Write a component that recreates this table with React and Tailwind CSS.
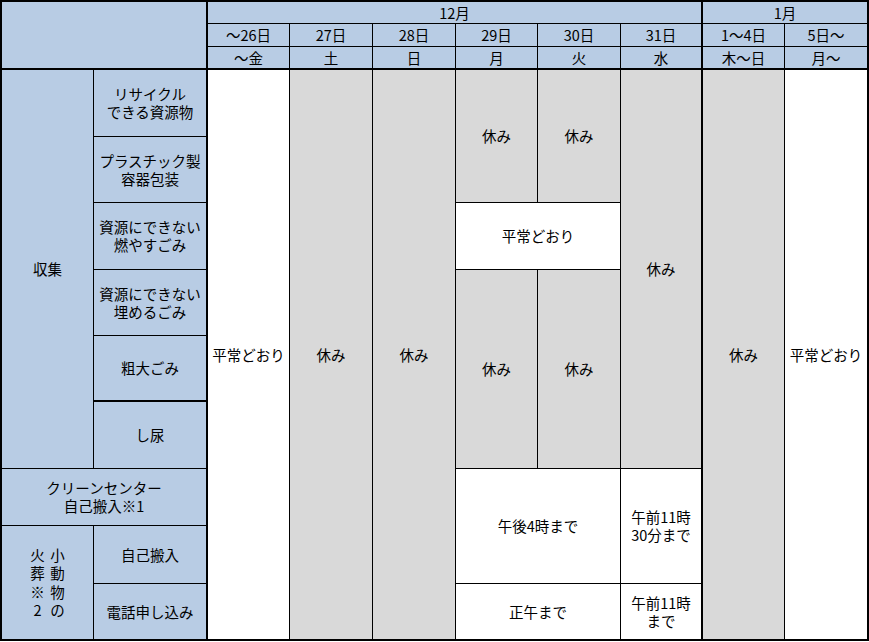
const BLUE = 'bg-[#b8cce4]';
const GRAY = 'bg-[#d9d9d9]';
const WHITE = 'bg-white';

// grid: 10 columns x 12 rows, each cell draws its own right/bottom border
const cells = [
  // header
  { pos: 'col-start-1 col-span-2 row-start-1 row-span-3', bg: BLUE, b: 'border-r-2 border-b-2' },
  { pos: 'col-start-3 col-span-6 row-start-1', bg: BLUE, b: 'border-r-2 border-b', text: '12月' },
  { pos: 'col-start-9 col-span-2 row-start-1', bg: BLUE, b: 'border-r-2 border-b', text: '1月' },

  { pos: 'col-start-3 row-start-2', bg: BLUE, b: 'border-r border-b', text: '～26日' },
  { pos: 'col-start-4 row-start-2', bg: BLUE, b: 'border-r border-b', text: '27日' },
  { pos: 'col-start-5 row-start-2', bg: BLUE, b: 'border-r border-b', text: '28日' },
  { pos: 'col-start-6 row-start-2', bg: BLUE, b: 'border-r border-b', text: '29日' },
  { pos: 'col-start-7 row-start-2', bg: BLUE, b: 'border-r border-b', text: '30日' },
  { pos: 'col-start-8 row-start-2', bg: BLUE, b: 'border-r-2 border-b', text: '31日' },
  { pos: 'col-start-9 row-start-2', bg: BLUE, b: 'border-r border-b', text: '1～4日' },
  { pos: 'col-start-10 row-start-2', bg: BLUE, b: 'border-r-2 border-b', text: '5日～' },

  { pos: 'col-start-3 row-start-3', bg: BLUE, b: 'border-r border-b-2', text: '～金' },
  { pos: 'col-start-4 row-start-3', bg: BLUE, b: 'border-r border-b-2', text: '土' },
  { pos: 'col-start-5 row-start-3', bg: BLUE, b: 'border-r border-b-2', text: '日' },
  { pos: 'col-start-6 row-start-3', bg: BLUE, b: 'border-r border-b-2', text: '月' },
  { pos: 'col-start-7 row-start-3', bg: BLUE, b: 'border-r border-b-2', text: '火' },
  { pos: 'col-start-8 row-start-3', bg: BLUE, b: 'border-r-2 border-b-2', text: '水' },
  { pos: 'col-start-9 row-start-3', bg: BLUE, b: 'border-r border-b-2', text: '木～日' },
  { pos: 'col-start-10 row-start-3', bg: BLUE, b: 'border-r-2 border-b-2', text: '月～' },

  // row labels
  { pos: 'col-start-1 row-start-4 row-span-6', bg: BLUE, b: 'border-r border-b', text: '収集' },
  { pos: 'col-start-2 row-start-4', bg: BLUE, b: 'border-r-2 border-b', text: 'リサイクル\nできる資源物' },
  { pos: 'col-start-2 row-start-5', bg: BLUE, b: 'border-r-2 border-b', text: 'プラスチック製\n容器包装' },
  { pos: 'col-start-2 row-start-6', bg: BLUE, b: 'border-r-2 border-b', text: '資源にできない\n燃やすごみ' },
  { pos: 'col-start-2 row-start-7', bg: BLUE, b: 'border-r-2 border-b', text: '資源にできない\n埋めるごみ' },
  { pos: 'col-start-2 row-start-8', bg: BLUE, b: 'border-r-2 border-b-2', text: '粗大ごみ' },
  { pos: 'col-start-2 row-start-9', bg: BLUE, b: 'border-r-2 border-b', text: 'し尿' },
  { pos: 'col-start-1 col-span-2 row-start-10', bg: BLUE, b: 'border-r-2 border-b', text: 'クリーンセンター\n自己搬入※1' },
  { pos: 'col-start-1 row-start-11 row-span-2', bg: BLUE, b: 'border-r border-b-2', vertical: ['火\n葬\n※\n2', '小\n動\n物\nの'] },
  { pos: 'col-start-2 row-start-11', bg: BLUE, b: 'border-r-2 border-b', text: '自己搬入' },
  { pos: 'col-start-2 row-start-12', bg: BLUE, b: 'border-r-2 border-b-2', text: '電話申し込み' },

  // schedule
  { pos: 'col-start-3 row-start-4 row-span-9', bg: WHITE, b: 'border-r border-b-2', text: '平常どおり' },
  { pos: 'col-start-4 row-start-4 row-span-9', bg: GRAY, b: 'border-r border-b-2', text: '休み' },
  { pos: 'col-start-5 row-start-4 row-span-9', bg: GRAY, b: 'border-r border-b-2', text: '休み' },
  { pos: 'col-start-6 row-start-4 row-span-2', bg: GRAY, b: 'border-r border-b', text: '休み' },
  { pos: 'col-start-7 row-start-4 row-span-2', bg: GRAY, b: 'border-r border-b', text: '休み' },
  { pos: 'col-start-6 col-span-2 row-start-6', bg: WHITE, b: 'border-r border-b', text: '平常どおり' },
  { pos: 'col-start-6 row-start-7 row-span-3', bg: GRAY, b: 'border-r border-b', text: '休み' },
  { pos: 'col-start-7 row-start-7 row-span-3', bg: GRAY, b: 'border-r border-b', text: '休み' },
  { pos: 'col-start-6 col-span-2 row-start-10 row-span-2', bg: WHITE, b: 'border-r border-b', text: '午後4時まで' },
  { pos: 'col-start-6 col-span-2 row-start-12', bg: WHITE, b: 'border-r border-b-2', text: '正午まで' },
  { pos: 'col-start-8 row-start-4 row-span-6', bg: GRAY, b: 'border-r-2 border-b', text: '休み' },
  { pos: 'col-start-8 row-start-10 row-span-2', bg: WHITE, b: 'border-r-2 border-b', text: '午前11時\n30分まで' },
  { pos: 'col-start-8 row-start-12', bg: WHITE, b: 'border-r-2 border-b-2', text: '午前11時\nまで' },
  { pos: 'col-start-9 row-start-4 row-span-9', bg: GRAY, b: 'border-r border-b-2', text: '休み' },
  { pos: 'col-start-10 row-start-4 row-span-9', bg: WHITE, b: 'border-r-2 border-b-2', text: '平常どおり' },
];

export default function App() {
  return (
    <div className="w-[869px] h-[642px] bg-white font-['Noto_Sans_CJK_JP','Noto_Sans',sans-serif] text-[14.5px] text-black">
      <div className="grid grid-cols-[92px_114px_82px_83px_83px_82px_83px_82px_82px_84px] grid-rows-[22px_23px_23px_67px_66px_67px_66px_66px_67px_57px_58px_57px] w-[869px] border-t-2 border-l-2 border-black">
        {cells.map((c, i) => (
          <div
            key={i}
            className={`${c.pos} ${c.bg} ${c.b} border-black flex items-center justify-center text-center leading-[18px] whitespace-pre-line overflow-hidden`}
          >
            {c.vertical ? (
              <div className="flex gap-[5px] items-start">
                {c.vertical.map((col) => (
                  <div key={col} className="w-[15px] text-center leading-[18.5px] whitespace-pre-line">
                    {col}
                  </div>
                ))}
              </div>
            ) : (
              c.text
            )}
          </div>
        ))}
      </div>
    </div>
  );
}
